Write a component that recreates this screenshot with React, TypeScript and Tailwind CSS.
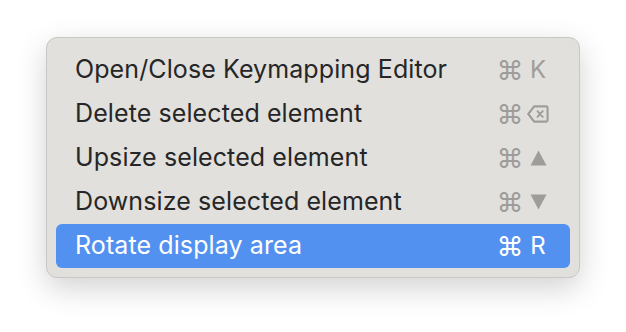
import React from 'react'

const DeleteIcon = () => (
  <svg width="23" height="20" viewBox="0 0 23 20" fill="none" stroke="currentColor" strokeWidth="2.2" strokeLinejoin="round" strokeLinecap="round">
    <path d="M7.5 2h12.5a1.5 1.5 0 0 1 1.5 1.5v13a1.5 1.5 0 0 1-1.5 1.5H7.5L1.3 10Z" />
    <path d="M11 7l5.5 6M16.5 7L11 13" strokeWidth="2" />
  </svg>
)

const Up = () => (
  <svg width="17" height="16" viewBox="0 0 17 16" fill="currentColor">
    <path d="M8.5 0.5 16.5 15.5H.5Z" />
  </svg>
)

const Down = () => (
  <svg width="17" height="16" viewBox="0 0 17 16" fill="currentColor">
    <path d="M.5 .5h16L8.5 15.5Z" />
  </svg>
)

const items: { label: string; key: React.ReactNode; active?: boolean }[] = [
  { label: 'Open/Close Keymapping Editor', key: <span className="text-[24px]">K</span> },
  { label: 'Delete selected element', key: <DeleteIcon /> },
  { label: 'Upsize selected element', key: <Up /> },
  { label: 'Downsize selected element', key: <Down /> },
  { label: 'Rotate display area', key: <span className="text-[24px]">R</span>, active: true },
]

export default function App() {
  return (
    <div
      className="w-[626px] h-[332px] bg-white pt-[37px] pl-[46px]"
      style={{ fontFamily: 'Inter, "Liberation Sans", sans-serif' }}
    >
      <div className="w-[534px] h-[241px] rounded-[11px] bg-[#e1e0dd] border border-[#c8c7c4] shadow-[0_10px_30px_rgba(0,0,0,0.18)] px-[9px] pt-[10px]">
        {items.map((item) => (
          <div
            key={item.label}
            className={
              'h-[44px] flex items-center rounded-[6px] pl-[19px] pr-[21px] text-[25px] ' +
              (item.active ? 'bg-[#5391f0] text-white' : 'text-[#262626]')
            }
          >
            <span className="flex-1 tracking-[0.1px]">{item.label}</span>
            <span
              className={
                'flex items-center flex-none ' +
                (item.active ? 'text-white' : 'text-[#9e9d9a]')
              }
            >
              <span className="w-[20px] flex justify-center text-[27px] leading-none">⌘</span>
              <span className="w-[22px] ml-[7px] flex justify-center">{item.key}</span>
            </span>
          </div>
        ))}
      </div>
    </div>
  )
}
